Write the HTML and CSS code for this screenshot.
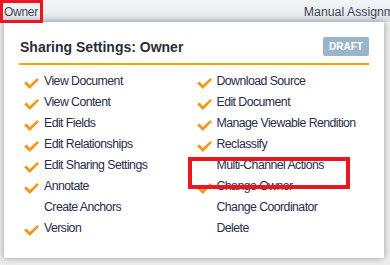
FILE: index.html
```html
<!DOCTYPE html>
<html lang="en">
<head>
	<meta charset="UTF-8">
	<title>Sharing Settings</title>
	<link rel="stylesheet" href="styles.css">
</head>
<body>
	<div class="topbar">
		<span class="owner_tab">Owner</span>
		<span class="manual">Manual Assignment</span>
	</div>

	<div class="share_panel">
		<div class="share_head">
			<h2>Sharing Settings: Owner</h2>
			<span class="badge">DRAFT</span>
		</div>

		<div class="perm_cols">
			<ul>
				<li><svg class="chk" viewBox="0 0 15 11"><path d="M0 5.2 L2.6 3.6 L5.8 7 L13.2 0 L15 1.8 L5.8 11 Z"/></svg>View Document</li>
				<li><svg class="chk" viewBox="0 0 15 11"><path d="M0 5.2 L2.6 3.6 L5.8 7 L13.2 0 L15 1.8 L5.8 11 Z"/></svg>View Content</li>
				<li><svg class="chk" viewBox="0 0 15 11"><path d="M0 5.2 L2.6 3.6 L5.8 7 L13.2 0 L15 1.8 L5.8 11 Z"/></svg>Edit Fields</li>
				<li><svg class="chk" viewBox="0 0 15 11"><path d="M0 5.2 L2.6 3.6 L5.8 7 L13.2 0 L15 1.8 L5.8 11 Z"/></svg>Edit Relationships</li>
				<li><svg class="chk" viewBox="0 0 15 11"><path d="M0 5.2 L2.6 3.6 L5.8 7 L13.2 0 L15 1.8 L5.8 11 Z"/></svg>Edit Sharing Settings</li>
				<li><svg class="chk" viewBox="0 0 15 11"><path d="M0 5.2 L2.6 3.6 L5.8 7 L13.2 0 L15 1.8 L5.8 11 Z"/></svg>Annotate</li>
				<li><span class="nochk"></span>Create Anchors</li>
				<li><svg class="chk" viewBox="0 0 15 11"><path d="M0 5.2 L2.6 3.6 L5.8 7 L13.2 0 L15 1.8 L5.8 11 Z"/></svg>Version</li>
			</ul>
			<ul>
				<li><svg class="chk" viewBox="0 0 15 11"><path d="M0 5.2 L2.6 3.6 L5.8 7 L13.2 0 L15 1.8 L5.8 11 Z"/></svg>Download Source</li>
				<li><svg class="chk" viewBox="0 0 15 11"><path d="M0 5.2 L2.6 3.6 L5.8 7 L13.2 0 L15 1.8 L5.8 11 Z"/></svg>Edit Document</li>
				<li><svg class="chk" viewBox="0 0 15 11"><path d="M0 5.2 L2.6 3.6 L5.8 7 L13.2 0 L15 1.8 L5.8 11 Z"/></svg>Manage Viewable Rendition</li>
				<li><svg class="chk" viewBox="0 0 15 11"><path d="M0 5.2 L2.6 3.6 L5.8 7 L13.2 0 L15 1.8 L5.8 11 Z"/></svg>Reclassify</li>
				<li class="marked"><span class="nochk"></span>Multi-Channel Actions</li>
				<li><svg class="chk" viewBox="0 0 15 11"><path d="M0 5.2 L2.6 3.6 L5.8 7 L13.2 0 L15 1.8 L5.8 11 Z"/></svg>Change Owner</li>
				<li><span class="nochk"></span>Change Coordinator</li>
				<li><span class="nochk"></span>Delete</li>
			</ul>
		</div>
	</div>
</body>
</html>
```

FILE: styles.css
```css
*{
	margin: 0;
	padding: 0;
	box-sizing: border-box;
}
body{
	width: 390px;
	height: 265px;
	overflow: hidden;
	background: #ececec;
	font-family: "Liberation Sans", Arial, sans-serif;
}
.topbar{
	display: flex;
	height: 22px;
	white-space: nowrap;
	background: linear-gradient(#f1f4f6 0, #edf0f2 55%, #d7dadd 100%);
	font-size: 12px;
	color: #3f4352;
}
.owner_tab{
	position: relative;
	z-index: 2;
	height: 23px;
	border: 3px solid #ea1720;
	padding: 1px 2px 0 1px;
	line-height: 16px;
	letter-spacing: -0.3px;
}
.manual{
	margin-left: 261px;
	padding-top: 2px;
	line-height: 20px;
	font-size: 12.3px;
}
.share_panel{
	width: 380px;
	height: 236px;
	margin-left: 4px;
	padding: 15px 15px 0 15px;
	background: #fff;
	box-shadow: 0 0 6px rgba(0, 0, 0, 0.35);
}
.share_head{
	display: flex;
	justify-content: space-between;
	align-items: center;
	padding-bottom: 7px;
	border-bottom: 2px solid #f6a400;
}
.share_head h2{
	padding-left: 1px;
	font-size: 14px;
	font-weight: bold;
	color: #2c2d38;
}
.badge{
	width: 46px;
	height: 19px;
	line-height: 19px;
	text-align: center;
	border-radius: 2px;
	background: #9bb4c9;
	color: #fff;
	font-size: 10px;
	font-weight: bold;
}
.perm_cols{
	display: flex;
	padding: 6px 0 0 5px;
}
.perm_cols ul{
	list-style: none;
	width: 175px;
}
.perm_cols li{
	display: flex;
	align-items: center;
	height: 21px;
	line-height: 21px;
	font-size: 12.3px;
	letter-spacing: -0.55px;
	color: #2a2d4c;
	white-space: nowrap;
}
.chk{
	width: 15px;
	height: 11px;
	margin: 4px 5px 0 0;
	fill: #f7961e;
	flex: none;
}
.nochk{
	width: 15px;
	margin-right: 5px;
	flex: none;
}
.perm_cols li.marked{
	position: relative;
}
.perm_cols li.marked::after{
	content: "";
	position: absolute;
	z-index: 2;
	left: -9px;
	top: 2px;
	width: 154px;
	height: 24px;
	border: 4px solid #ea1720;
}
```
